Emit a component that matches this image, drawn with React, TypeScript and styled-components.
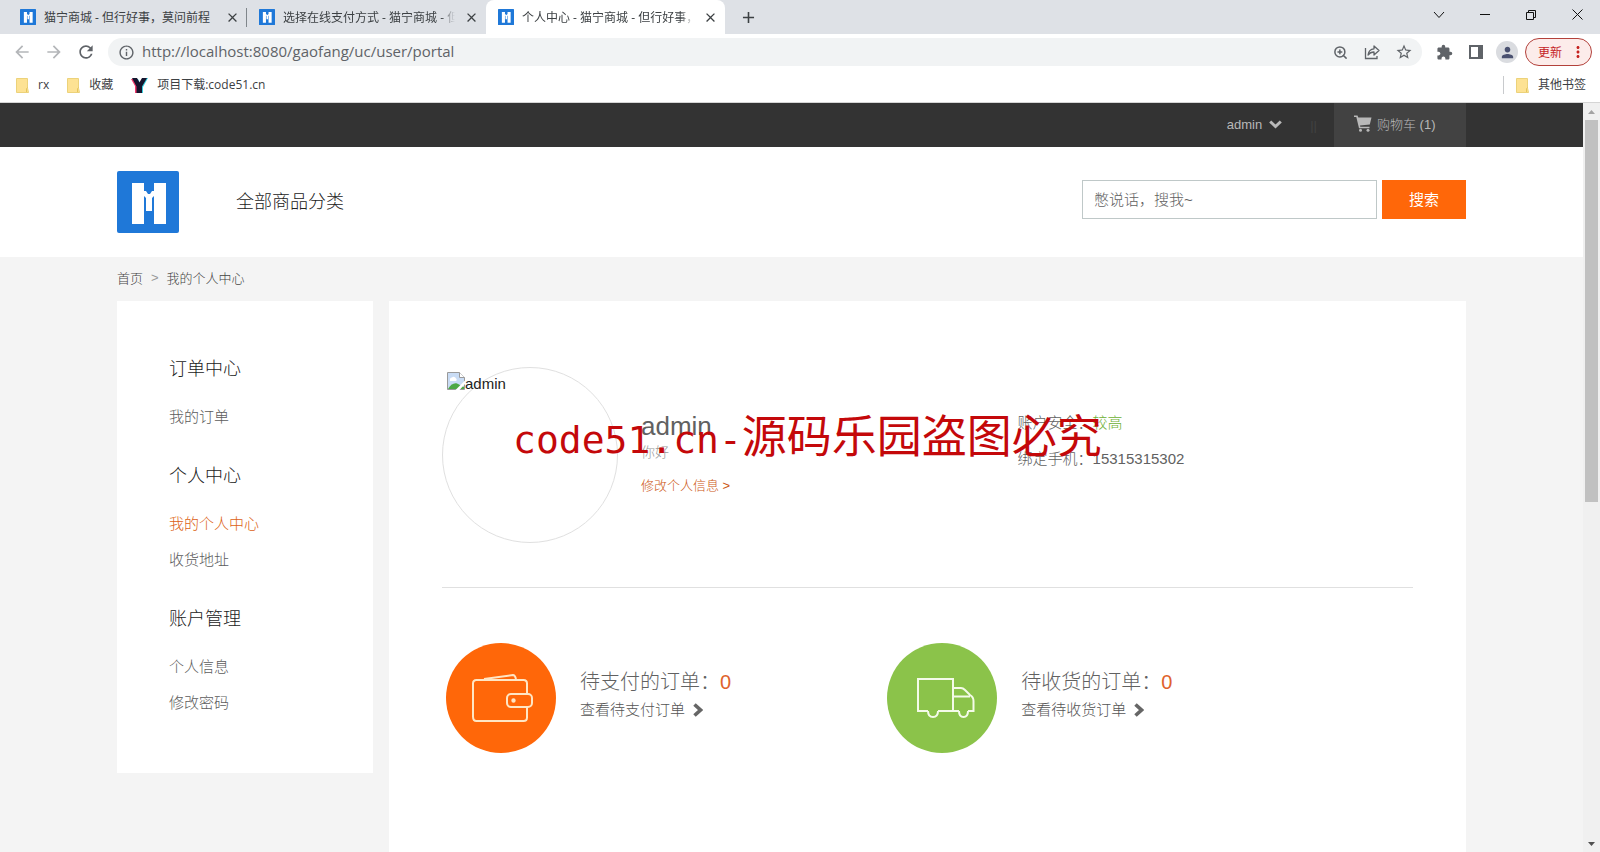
import React from 'react';
import styled, { createGlobalStyle, css } from 'styled-components';
import {
  MdArrowBack,
  MdArrowForward,
  MdRefresh,
  MdInfoOutline,
  MdStarBorder,
  MdExtension,
  MdPerson,
  MdMoreVert,
  MdClose,
  MdAdd,
} from 'react-icons/md';
import { ZoomIn } from 'lucide-react';

const GlobalStyle = createGlobalStyle`
  *, *::before, *::after { box-sizing: border-box; }
  html, body { margin: 0; padding: 0; }
  body {
    font-family: "Liberation Sans", "Noto Sans CJK SC", sans-serif;
    font-size: 15px;
    font-weight: 300;
    color: #222;
    background: #f4f4f4;
  }
  h1, h2, p, ul { margin: 0; padding: 0; font-weight: inherit; }
  ul { list-style: none; }
  a { color: inherit; text-decoration: none; }
  button, input { font: inherit; color: inherit; margin: 0; padding: 0; border: 0; background: none; }
  svg { display: block; flex: none; }
`;

const chromeFont = '"Open Sans", "Noto Sans CJK SC", sans-serif';

const Window = styled.div`
  display: flex;
  flex-direction: column;
  height: 100vh;
  overflow: hidden;
`;

/* ---------- browser frame ---------- */

const Chrome = styled.header`
  flex: none;
  background: #fff;
  font-family: ${chromeFont};
  font-size: 12px;
  font-weight: 400;
  color: #3c4043;
  border-bottom: 1px solid #d5d5d5;
`;

const TabStrip = styled.div`
  display: flex;
  align-items: stretch;
  height: 34px;
  padding-left: 8px;
  background: #dee1e6;
`;

const Tab = styled.div<{ $active?: boolean; $divider?: boolean }>`
  display: flex;
  align-items: center;
  width: 239px;
  padding: 0 7px 0 12px;
  border-radius: 8px 8px 0 0;
  position: relative;
  ${(p) => p.$active && css`background: #fff;`}
  ${(p) =>
    p.$divider &&
    css`
      &::after {
        content: '';
        position: absolute;
        right: 0;
        top: 8px;
        width: 1px;
        height: 19px;
        background: #80868b;
      }
    `}
`;

const TabTitle = styled.span<{ $fade?: boolean }>`
  flex: 1;
  min-width: 0;
  margin: 0 8px;
  padding-top: 1px;
  line-height: 18px;
  white-space: nowrap;
  overflow: hidden;
  ${(p) => p.$fade && css`mask-image: linear-gradient(to right, #000 92%, transparent);`}
`;

const IconButton = styled.button<{ $size?: number }>`
  display: flex;
  align-items: center;
  justify-content: center;
  flex: none;
  width: ${(p) => p.$size ?? 32}px;
  height: ${(p) => p.$size ?? 32}px;
`;

const NewTab = styled(IconButton)`
  align-self: center;
  margin-left: 7px;
`;

const WindowControls = styled.div`
  display: flex;
  margin-left: auto;
  height: 29px;
  color: #111;
`;

const ControlButton = styled.button`
  display: flex;
  align-items: center;
  justify-content: center;
  width: 46px;
`;

const Toolbar = styled.div`
  display: flex;
  align-items: center;
  height: 36px;
  padding: 0 8px 0 6px;
  color: #5f6368;
`;

const Omnibox = styled.div`
  display: flex;
  align-items: center;
  flex: 1;
  height: 28px;
  margin: 0 6px;
  padding: 0 2px 0 10px;
  border-radius: 14px;
  background: #f1f3f4;
`;

const Address = styled.input`
  flex: 1;
  min-width: 0;
  height: 22px;
  margin: 0 0 2px 7px;
  font-family: "Open Sans", sans-serif;
  font-size: 15px;
  color: #5f6368;
  outline: none;
`;

const Avatar = styled.button`
  display: flex;
  align-items: center;
  justify-content: center;
  width: 22px;
  height: 22px;
  margin: 0 7px 0 4px;
  border-radius: 50%;
  background: #dadce0;
  color: #4a5170;
`;

const UpdateButton = styled.button`
  display: flex;
  align-items: center;
  justify-content: space-between;
  width: 67px;
  height: 28px;
  padding: 0 4px 0 12px;
  border: 1px solid #b3413b;
  border-radius: 14px;
  background: #fcecea;
  color: #c5221f;
`;

const Bookmarks = styled.nav`
  display: flex;
  align-items: center;
  gap: 18px;
  height: 32px;
  padding: 0 14px 2px 16px;
`;

const Bookmark = styled.a<{ $last?: boolean }>`
  display: flex;
  align-items: center;
  gap: 9px;
  line-height: 18px;
  ${(p) =>
    p.$last &&
    css`
      margin-left: auto;
      padding-left: 12px;
      border-left: 1px solid #c8cacd;
    `}
`;

/* ---------- page ---------- */

const Viewport = styled.div`
  display: flex;
  flex: 1;
  min-height: 0;
`;

const Page = styled.div`
  flex: 1;
  min-width: 0;
  overflow: hidden;
  display: flex;
  flex-direction: column;
  position: relative;
`;

const Container = styled.div`
  width: 100%;
  max-width: 1349px;
  margin: 0 auto;
`;

const TopBar = styled.div`
  flex: none;
  background: #333;
  color: #b8b8b8;
  font-size: 13px;
`;

const TopBarInner = styled(Container)`
  display: flex;
  justify-content: flex-end;
  align-items: stretch;
  height: 44px;
`;

const UserMenu = styled.button`
  display: flex;
  align-items: center;
  gap: 7px;
  padding-bottom: 2px;
  font-weight: 400;
`;

const Separator = styled.span`
  display: flex;
  align-items: center;
  margin: 0 17px 0 28px;
  color: #424242;
`;

const CartLink = styled.a`
  display: flex;
  align-items: center;
  gap: 5px;
  width: 132px;
  padding: 0 0 3px 20px;
  background: #424242;
`;

const Header = styled.div`
  flex: none;
  background: #fff;
`;

const HeaderInner = styled(Container)`
  display: flex;
  align-items: center;
  height: 110px;
`;

const AllCategories = styled.a`
  margin-left: 57px;
  font-size: 18px;
  line-height: 24px;
`;

const Search = styled.form`
  display: flex;
  gap: 5px;
  margin: 0 0 5px auto;
`;

const SearchInput = styled.input`
  width: 295px;
  height: 39px;
  padding: 0 11px;
  border: 1px solid #bfc8c8;
  background: #fff;
  font-size: 15px;
  outline: none;
  &::placeholder { color: #616161; opacity: 1; }
`;

const SearchButton = styled.button`
  width: 84px;
  height: 39px;
  padding-bottom: 2px;
  background: #ff6709;
  color: #fff;
  font-weight: 400;
`;

const Crumbs = styled(Container)`
  flex: none;
  display: flex;
  align-items: center;
  gap: 8px;
  height: 44px;
  padding-bottom: 3px;
  font-size: 13px;
  color: #444;
`;

const CrumbArrow = styled.span`
  color: #999;
`;

const Columns = styled(Container)`
  display: flex;
  align-items: flex-start;
  gap: 16px;
  flex: 1;
  min-height: 0;
`;

const Sidebar = styled.aside`
  flex: none;
  width: 256px;
  padding: 56px 52px 52px;
  background: #fff;
`;

const MenuGroup = styled.section`
  & + & { margin-top: 29px; }
`;

const MenuHeading = styled.h2`
  margin-bottom: 18px;
  font-size: 18px;
  line-height: 24px;
`;

const MenuLink = styled.a<{ $active?: boolean }>`
  display: block;
  line-height: 36px;
  color: ${(p) => (p.$active ? '#dc5f14' : '#5c5c5c')};
`;

const Main = styled.main`
  flex: 1;
  min-width: 0;
  align-self: stretch;
  padding: 66px 53px 0;
  background: #fff;
`;

const Profile = styled.section`
  display: flex;
  height: 221px;
  border-bottom: 1px solid #e0e0e0;
`;

const Portrait = styled.div`
  flex: none;
  width: 176px;
  height: 176px;
  padding: 4px;
  border: 1px solid #e0e0e0;
  border-radius: 50%;
`;

const MissingImage = styled.div`
  display: flex;
  align-items: flex-start;
  line-height: 24px;
  font-weight: 400;
`;

const Identity = styled.div`
  flex: 20;
  margin-left: 23px;
  padding-top: 43px;
`;

const UserName = styled.h1`
  font-size: 26px;
  line-height: 32px;
  color: #616161;
`;

const Greeting = styled.p`
  font-size: 14px;
  line-height: 20px;
  color: #999;
`;

const EditLink = styled.a`
  display: inline-block;
  margin-top: 14px;
  font-size: 13px;
  line-height: 20px;
  color: #cc5510;
`;

const Security = styled.ul`
  flex: 21;
  padding-top: 38px;
  line-height: 36px;
  color: #616161;
`;

const Good = styled.span`
  color: #6db033;
`;

const Orders = styled.section`
  display: grid;
  grid-template-columns: 5fr 6fr;
  padding-top: 55px;
`;

const OrderCard = styled.div`
  display: flex;
  align-items: center;
  gap: 24px;
  padding-left: 4px;
`;

const OrderText = styled.div`
  padding-bottom: 9px;
`;

const Disc = styled.div<{ $color: string }>`
  display: flex;
  align-items: center;
  justify-content: center;
  flex: none;
  width: 110px;
  height: 110px;
  border-radius: 50%;
  background: ${(p) => p.$color};
`;

const OrderTitle = styled.h2`
  font-size: 20px;
  line-height: 32px;
  color: #616161;
`;

const Count = styled.span`
  color: #e0622c;
`;

const OrderLink = styled.a`
  display: flex;
  align-items: center;
  gap: 8px;
  line-height: 24px;
  color: #555;
`;

const Watermark = styled.p`
  position: absolute;
  left: 513px;
  top: 297px;
  font-family: "Noto Sans CJK SC", sans-serif;
  font-size: 45px;
  font-weight: 400;
  line-height: 68px;
  color: #c4080a;
  white-space: nowrap;
  pointer-events: none;
`;

const WatermarkSite = styled.span`
  font-family: "DejaVu Sans Mono", monospace;
  font-size: 38px;
`;

/* ---------- scrollbar ---------- */

const ScrollTrack = styled.div`
  flex: none;
  display: flex;
  flex-direction: column;
  align-items: center;
  width: 17px;
  background: #f0f0f0;
`;

const ScrollArrow = styled.div<{ $down?: boolean }>`
  display: flex;
  align-items: center;
  justify-content: center;
  width: 17px;
  height: 17px;
  color: ${(p) => (p.$down ? '#505050' : '#a3a3a3')};
`;

const ScrollThumb = styled.div`
  width: 13px;
  height: 51%;
  margin-bottom: auto;
  background: #c1c1c1;
`;

/* ---------- drawings ---------- */

const ShopLogo = ({ size }: { size: number }) => (
  <svg width={size} height={size} viewBox="0 0 62 62" aria-hidden="true">
    <rect width="62" height="62" rx="2" fill="#1f78d8" />
    <path
      fill="#fff"
      d="M15 12H27V20H29L31 23H33L35 20H37V12H49V53H37V25L35 27V40H29V27L27 25V53H15Z"
    />
  </svg>
);

const Folder = () => (
  <svg width="13" height="15" viewBox="0 0 13 15" aria-hidden="true">
    <path d="M.5.5H11.5V10L12.5 14.5H.5Z" fill="#fde293" stroke="#ecd27a" />
    <path d="M10.5 14V10.5L11.5 9.5" stroke="#e6c65c" fill="none" />
  </svg>
);

const YMark = () => (
  <svg width="17" height="17" viewBox="0 0 17 17" aria-hidden="true">
    <path d="M0 2H6L8 6 11 2H15L10 10V16H4V9Z" fill="#f0386b" />
    <path d="M2 2H7L9 6 12 1H17L12 10V16H6V9Z" fill="#35d0e0" />
    <path d="M1 1H6L8.500 5.500 11 1H16L11 9.500V16H5.500V9.500Z" fill="#15152e" />
  </svg>
);

const ShareIcon = () => (
  <svg width="18" height="18" viewBox="0 0 18 18" fill="none" stroke="currentColor" strokeWidth="1.3" aria-hidden="true">
    <path d="M2.500 5V15.500H14V13" />
    <path d="M5 12C5.500 8 8 6 11 5.800V3L16 7.500 11 12V9C8.500 9 6.500 10 5 12Z" strokeLinejoin="round" />
  </svg>
);

const PanelIcon = () => (
  <svg width="14" height="14" viewBox="0 0 14 14" aria-hidden="true">
    <path fill="currentColor" fillRule="evenodd" d="M0 0H14V14H0ZM2 2V12H9V2Z" />
  </svg>
);

const CartIcon = () => (
  <svg width="18" height="17" viewBox="0 0 18 17" fill="currentColor" aria-hidden="true">
    <path d="M0 .5H3.500L4.300 2.500H17.500L15.800 9.500 6 10.600 6.300 11.700H15.500V13.200H5L2.300 2H0Z" />
    <circle cx="6.500" cy="15.200" r="1.500" />
    <circle cx="14" cy="15.200" r="1.500" />
  </svg>
);

const ChevronDown = () => (
  <svg width="13" height="9" viewBox="0 0 13 9" aria-hidden="true">
    <path d="M1.200 1.500 6.500 6.500 11.800 1.500" fill="none" stroke="currentColor" strokeWidth="3" />
  </svg>
);

const ChevronRight = () => (
  <svg width="10" height="14" viewBox="0 0 10 14" aria-hidden="true">
    <path d="M1.500 1.500 7.500 7 1.500 12.500" fill="none" stroke="#666" strokeWidth="3.600" />
  </svg>
);

const BrokenImage = () => (
  <svg width="18" height="18" viewBox="0 0 18 18" aria-hidden="true">
    <path d="M.5.5H12.500L17.500 5.500V17.500H.5Z" fill="#c9dcf5" stroke="#9a9a9a" />
    <path d="M12.500.5V5.500H17.500" fill="#fff" stroke="#9a9a9a" />
    <path d="M3 8A2 2 0 0 1 5 5.500 2.500 2.500 0 0 1 9 6.500 1.500 1.500 0 0 1 9 9H3Z" fill="#fff" />
    <path d="M1 17C3 13 7 10.500 10 11.500L17 15V17Z" fill="#4da845" />
    <path d="M8.500 18 18 8.500V12L12.500 18Z" fill="#fff" />
  </svg>
);

const Wallet = () => (
  <svg width="64" height="50" viewBox="0 0 64 50" fill="none" stroke="#ffe6c4" strokeWidth="2" aria-hidden="true">
    <path d="M58 21V10.500Q58 7 54.500 7H7.500Q4 7 4 10.500V43.500Q4 48 7.500 48H54.500Q58 48 58 44.500V34" />
    <path d="M15 6 44 2Q46 2 47 6" />
    <rect x="38" y="21" width="25" height="13" rx="4" />
    <circle cx="44.500" cy="27.500" r="1.200" fill="#ffe6c4" />
  </svg>
);

const Truck = () => (
  <svg width="66" height="42" viewBox="-8 0 66 42" fill="none" stroke="#f4fbe8" strokeWidth="2" aria-hidden="true">
    <path d="M11 34H1V2H36V34H42M21 34H36" />
    <path d="M36 11H44Q46 11 48 13L53 18Q56.500 20 56.500 24V34H51M36 19.500H53" />
    <path d="M11 34Q11 40 16 40 21 40 21 34M42 34Q42 40 46.500 40 51 40 51 34" />
  </svg>
);

const tabs = [
  { title: '猫宁商城 - 但行好事，莫问前程', divider: true },
  { title: '选择在线支付方式 - 猫宁商城 - 但行好事', fade: true },
  { title: '个人中心 - 猫宁商城 - 但行好事，莫问前程', active: true, fade: true },
];

const menu = [
  { heading: '订单中心', items: ['我的订单'] },
  { heading: '个人中心', items: ['我的个人中心', '收货地址'] },
  { heading: '账户管理', items: ['个人信息', '修改密码'] },
];

const orders = [
  { title: '待支付的订单：', count: 0, link: '查看待支付订单', color: '#ff6709', icon: <Wallet /> },
  { title: '待收货的订单：', count: 0, link: '查看待收货订单', color: '#8bc34a', icon: <Truck /> },
];

function BrowserChrome() {
  return (
    <Chrome>
      <TabStrip>
        {tabs.map((t) => (
          <Tab key={t.title} $active={t.active} $divider={t.divider}>
            <ShopLogo size={16} />
            <TabTitle $fade={t.fade}>{t.title}</TabTitle>
            <IconButton $size={16} aria-label="关闭标签页">
              <MdClose size={15} />
            </IconButton>
          </Tab>
        ))}
        <NewTab aria-label="新标签页">
          <MdAdd size={19} />
        </NewTab>
        <WindowControls>
          <ControlButton aria-label="搜索标签页">
            <svg width="12" height="8" viewBox="0 0 12 8" fill="none" stroke="currentColor">
              <path d="M1 1 6 6.500 11 1" />
            </svg>
          </ControlButton>
          <ControlButton aria-label="最小化">
            <svg width="10" height="1" viewBox="0 0 10 1">
              <rect width="10" height="1" fill="currentColor" />
            </svg>
          </ControlButton>
          <ControlButton aria-label="还原">
            <svg width="10" height="10" viewBox="0 0 10 10" fill="none" stroke="currentColor">
              <path d="M.5 2.500H7.500V9.500H.5ZM2.500 2.500V.5H9.500V7.500H7.500" />
            </svg>
          </ControlButton>
          <ControlButton aria-label="关闭">
            <svg width="11" height="11" viewBox="0 0 11 11" fill="none" stroke="currentColor">
              <path d="M.5.5 10.500 10.500M10.500.5.5 10.500" />
            </svg>
          </ControlButton>
        </WindowControls>
      </TabStrip>
      <Toolbar>
        <IconButton aria-label="后退"><MdArrowBack size={20} color="#b4b6b9" /></IconButton>
        <IconButton aria-label="前进"><MdArrowForward size={20} color="#b4b6b9" /></IconButton>
        <IconButton aria-label="重新加载"><MdRefresh size={20} /></IconButton>
        <Omnibox>
          <MdInfoOutline size={17} />
          <Address aria-label="地址" defaultValue="http://localhost:8080/gaofang/uc/user/portal" />
          <IconButton aria-label="缩放"><ZoomIn size={15} strokeWidth={2.4} /></IconButton>
          <IconButton aria-label="分享"><ShareIcon /></IconButton>
          <IconButton aria-label="收藏"><MdStarBorder size={18} /></IconButton>
        </Omnibox>
        <IconButton aria-label="扩展程序"><MdExtension size={17} /></IconButton>
        <IconButton aria-label="侧边栏"><PanelIcon /></IconButton>
        <Avatar aria-label="个人资料"><MdPerson size={17} /></Avatar>
        <UpdateButton>
          更新
          <MdMoreVert size={18} />
        </UpdateButton>
      </Toolbar>
      <Bookmarks>
        <Bookmark href="#"><Folder />rx</Bookmark>
        <Bookmark href="#"><Folder />收藏</Bookmark>
        <Bookmark href="#"><YMark />项目下载:code51.cn</Bookmark>
        <Bookmark href="#" $last><Folder />其他书签</Bookmark>
      </Bookmarks>
    </Chrome>
  );
}

export default function App() {
  return (
    <Window>
      <GlobalStyle />
      <BrowserChrome />
      <Viewport>
        <Page>
          <TopBar>
            <TopBarInner>
              <UserMenu>admin <ChevronDown /></UserMenu>
              <Separator>||</Separator>
              <CartLink href="#"><CartIcon />购物车 (1)</CartLink>
            </TopBarInner>
          </TopBar>
          <Header>
            <HeaderInner>
              <a href="#" aria-label="猫宁商城"><ShopLogo size={62} /></a>
              <AllCategories href="#">全部商品分类</AllCategories>
              <Search onSubmit={(e) => e.preventDefault()}>
                <SearchInput aria-label="搜索商品" placeholder="憋说话，搜我~" />
                <SearchButton type="submit">搜索</SearchButton>
              </Search>
            </HeaderInner>
          </Header>
          <Crumbs as="nav">
            <a href="#">首页</a>
            <CrumbArrow>&gt;</CrumbArrow>
            <span>我的个人中心</span>
          </Crumbs>
          <Columns>
            <Sidebar>
              {menu.map((group) => (
                <MenuGroup key={group.heading}>
                  <MenuHeading>{group.heading}</MenuHeading>
                  {group.items.map((item) => (
                    <MenuLink key={item} href="#" $active={item === '我的个人中心'}>{item}</MenuLink>
                  ))}
                </MenuGroup>
              ))}
            </Sidebar>
            <Main>
              <Profile>
                <Portrait>
                  <MissingImage><BrokenImage />admin</MissingImage>
                </Portrait>
                <Identity>
                  <UserName>admin</UserName>
                  <Greeting>你好</Greeting>
                  <EditLink href="#">修改个人信息 &gt;</EditLink>
                </Identity>
                <Security>
                  <li>账户安全：<Good>较高</Good></li>
                  <li>绑定手机：15315315302</li>
                </Security>
              </Profile>
              <Orders>
                {orders.map((o) => (
                  <OrderCard key={o.title}>
                    <Disc $color={o.color}>{o.icon}</Disc>
                    <OrderText>
                      <OrderTitle>{o.title}<Count>{o.count}</Count></OrderTitle>
                      <OrderLink href="#">{o.link}<ChevronRight /></OrderLink>
                    </OrderText>
                  </OrderCard>
                ))}
              </Orders>
            </Main>
          </Columns>
          <Watermark><WatermarkSite>code51.cn-</WatermarkSite>源码乐园盗图必究</Watermark>
        </Page>
        <ScrollTrack aria-hidden="true">
          <ScrollArrow>
            <svg width="7" height="4" viewBox="0 0 7 4"><path d="M0 4 3.500 0 7 4Z" fill="currentColor" /></svg>
          </ScrollArrow>
          <ScrollThumb />
          <ScrollArrow $down>
            <svg width="7" height="4" viewBox="0 0 7 4"><path d="M0 0 3.500 4 7 0Z" fill="currentColor" /></svg>
          </ScrollArrow>
        </ScrollTrack>
      </Viewport>
    </Window>
  );
}
